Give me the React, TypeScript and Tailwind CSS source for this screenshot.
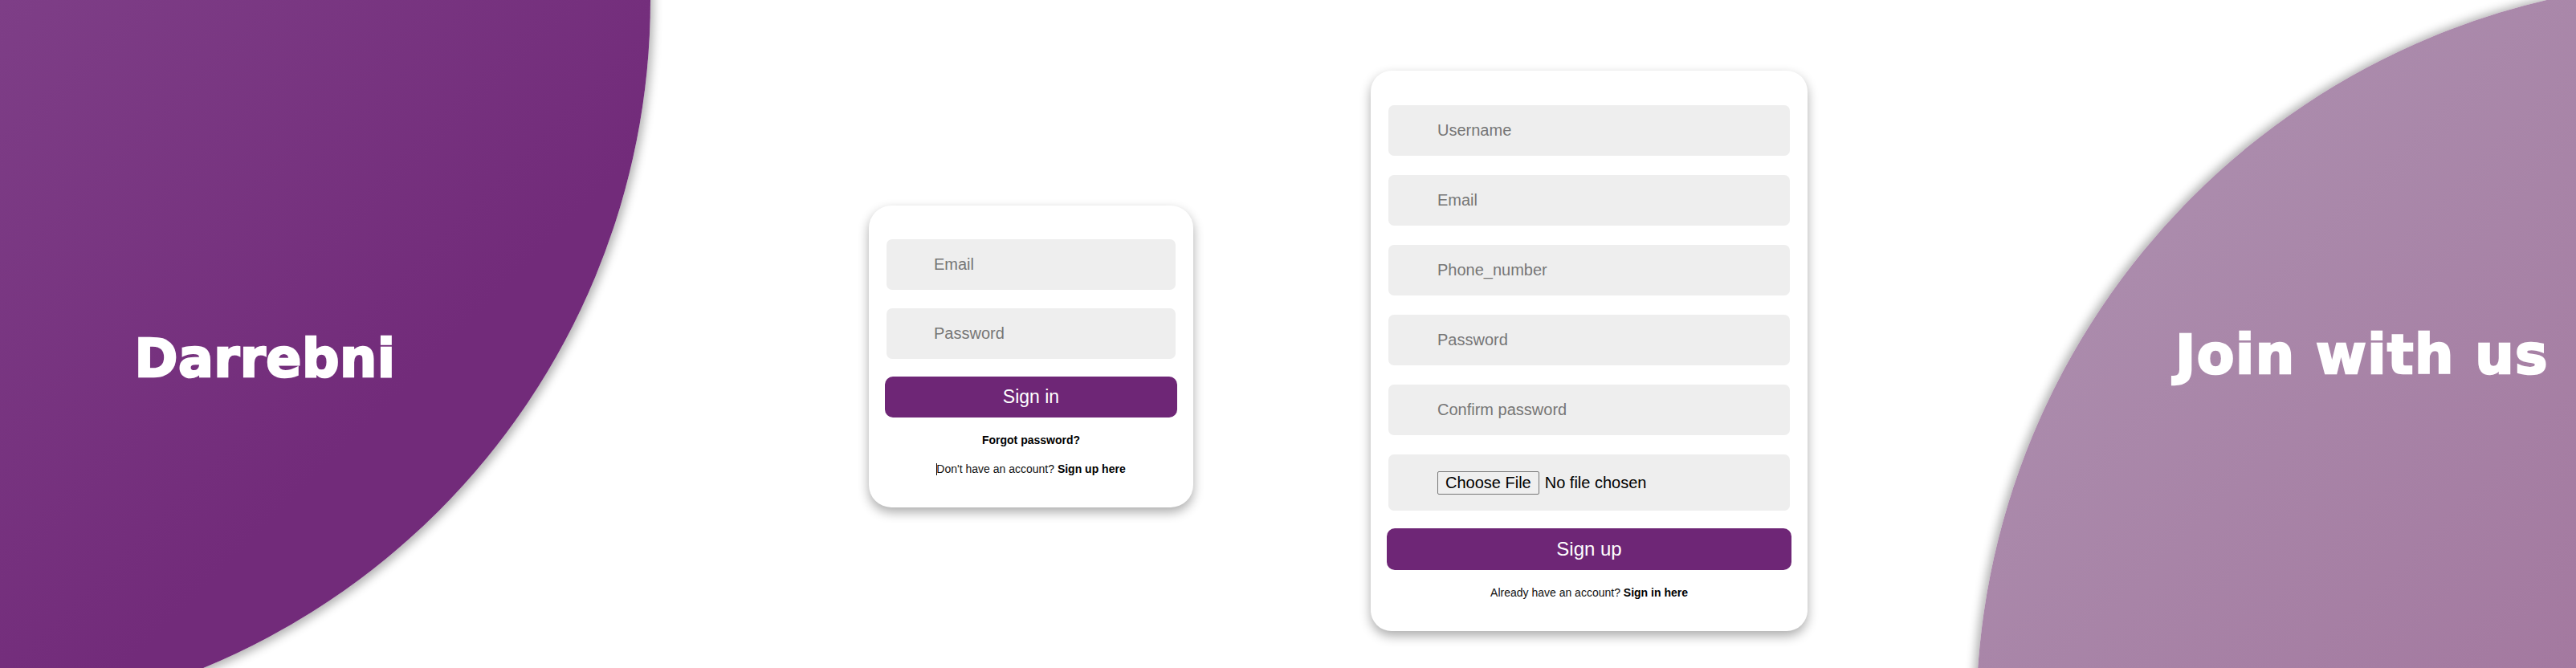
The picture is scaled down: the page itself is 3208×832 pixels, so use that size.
import React from "react";

function Field({ placeholder, indent }: { placeholder: string; indent: string }) {
  return (
    <div className="mx-[2px] h-[63px] rounded-[7px] bg-[#eeeeee]">
      <input
        readOnly
        placeholder={placeholder}
        className={`h-full w-full bg-transparent ${indent} pr-3 text-[20px] text-black outline-none placeholder:text-[#767676]`}
      />
    </div>
  );
}

function SignInCard() {
  return (
    <div className="ml-[422px] mt-[256px] flex w-[404px] flex-col rounded-[28px] bg-white px-[20px] pb-[40px] pt-[42px] shadow-[0_6px_14px_rgba(0,0,0,0.33)]">
      <div className="flex flex-col gap-[23px]">
        <Field placeholder="Email" indent="pl-[59px]" />
        <Field placeholder="Password" indent="pl-[59px]" />
      </div>
      <button className="mt-[22px] h-[51px] w-full rounded-[10px] bg-[#6e2676] text-[23px] text-white">
        Sign in
      </button>
      <p className="mt-[20px] text-center text-[14px] font-bold leading-[16px] text-black">Forgot password?</p>
      <p className="mt-[20px] text-center text-[14px] leading-[16px] text-[#111]">
        <span className="-mr-px inline-block h-[15px] w-px bg-black align-[-3px]" />
        Don't have an account? <span className="font-bold text-black">Sign up here</span>
      </p>
    </div>
  );
}

function SignUpCard() {
  return (
    <div className="ml-[221px] mt-[88px] flex w-[544px] flex-col rounded-[26px] bg-white px-[20px] pb-[40px] pt-[43px] shadow-[0_6px_14px_rgba(0,0,0,0.33)]">
      <div className="flex flex-col gap-[24px]">
        <Field placeholder="Username" indent="pl-[61px]" />
        <Field placeholder="Email" indent="pl-[61px]" />
        <Field placeholder="Phone_number" indent="pl-[61px]" />
        <Field placeholder="Password" indent="pl-[61px]" />
        <Field placeholder="Confirm password" indent="pl-[61px]" />
        <div className="mx-[2px] flex h-[70px] items-center rounded-[7px] bg-[#eeeeee] pl-[61px]">
          <span className="flex h-[29px] items-center rounded-[2px] border border-[#767676] bg-[#efefef] px-[9px] text-[20px] text-black">
            Choose File
          </span>
          <span className="ml-[7px] text-[20px] text-black">No file chosen</span>
        </div>
      </div>
      <button className="mt-[22px] h-[52px] w-full rounded-[10px] bg-[#6e2676] text-[24px] text-white">
        Sign up
      </button>
      <p className="mt-[20px] text-center text-[14px] leading-[16px] text-[#111]">
        Already have an account? <span className="font-bold text-black">Sign in here</span>
      </p>
    </div>
  );
}

export default function App() {
  return (
    <div className="relative h-[832px] w-full overflow-hidden bg-white font-['Liberation_Sans',Arial,sans-serif]">
      <div className="absolute left-[-990px] top-[-900px] h-[1800px] w-[1800px] rounded-full bg-[linear-gradient(135deg,#7f4088_50%,#722b7a_80%)] shadow-[4px_4px_12px_rgba(0,0,0,0.3)]" />
      <div className="absolute left-[2461px] top-[-24px] h-[1838px] w-[1838px] rounded-full bg-[linear-gradient(135deg,#ab8bac_15%,#a3789f_45%)] shadow-[-4px_-2px_12px_rgba(0,0,0,0.3)]" />
      <div className="relative z-10 flex h-full items-start">
        <div className="flex w-[660px] justify-center pt-[414px]">
          <h1 className="font-['DejaVu_Sans',sans-serif] text-[65px] font-bold leading-none tracking-[0.5px] text-white [-webkit-text-stroke:2.5px_white]">
            Darrebni
          </h1>
        </div>
        <SignInCard />
        <SignUpCard />
        <div className="ml-[458px] pt-[408px]">
          <h2 className="whitespace-nowrap font-['DejaVu_Sans',sans-serif] text-[68px] font-bold leading-none tracking-[1.5px] text-white [-webkit-text-stroke:2.5px_white]">
            Join with us
          </h2>
        </div>
      </div>
    </div>
  );
}
